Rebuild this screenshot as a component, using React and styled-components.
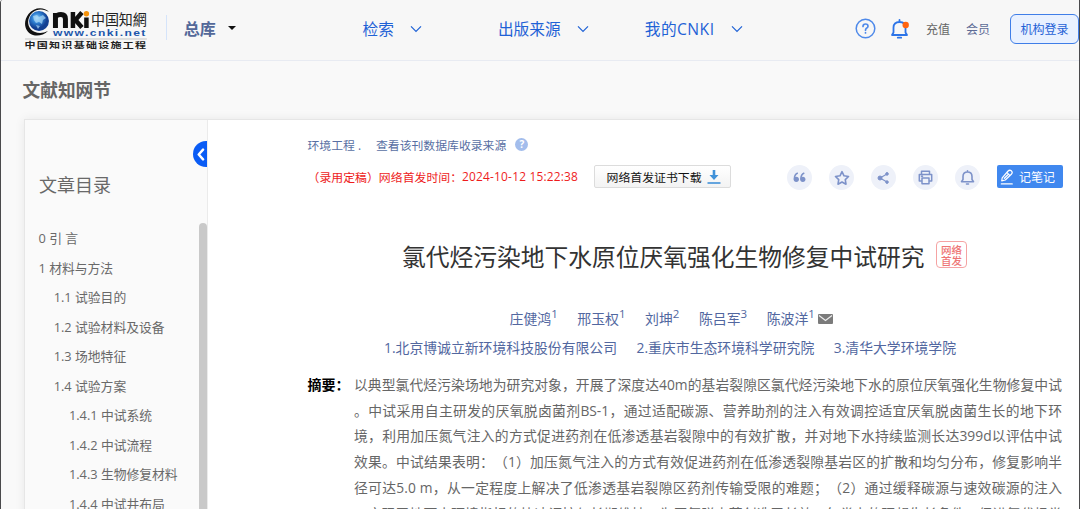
import React from 'react';
import styled, { createGlobalStyle } from 'styled-components';

const GlobalStyle = createGlobalStyle`
  * {
    box-sizing: border-box;
  }

  body {
    margin: 0;
    overflow: hidden;
    background: #f9f9f9;
    font-family: 'Open Sans', 'Noto Sans CJK SC', sans-serif;
    text-spacing-trim: space-all;
    white-space: nowrap;
  }
`;

const Page = styled.div`
  width: 1080px;
  height: 509px;
  overflow: hidden;
  border-left: 1px solid #4a4a4c;
  border-right: 1px solid #4a4a4c;
  border-top-left-radius: 3px;
`;

const Header = styled.header`
  display: flex;
  align-items: center;
  height: 61px;
  background: #f7f7f7;
  border-bottom: 1px solid #e8ebf2;
  padding: 0 0 3px 23px;
`;

const Divider = styled.div`
  width: 1px;
  height: 25px;
  margin: 0 16.5px 2px 18.5px;
  background: #d5e4fa;
`;

const Library = styled.div`
  display: flex;
  align-items: center;
  width: 179px;
  padding-bottom: 2px;
  font-size: 16px;
  font-weight: 700;
  color: #536899;

  &::after {
    content: '';
    margin: 0 0 0 12px;
    border: 4px solid transparent;
    border-top-color: #111;
    border-bottom: 0;
  }
`;

const NavItem = styled.div`
  display: flex;
  align-items: center;
  gap: 16px;
  width: ${props => props.$width}px;
  font-size: 15.7px;
  color: #1f62d6;
  letter-spacing: ${props => props.$spacing || 0}px;
`;

const HeaderTools = styled.div`
  display: flex;
  align-items: center;
  font-size: 12px;
  color: #666;

  svg {
    display: block;
    margin-right: 14px;
  }

  span {
    margin-left: 2px;
    margin-right: 14px;
  }

  span + span {
    color: #5d6b96;
    margin-right: 20px;
  }
`;

const LoginButton = styled.button`
  width: 69px;
  height: 30px;
  flex-shrink: 0;
  padding: 0;
  border: 1px solid #3f7ee8;
  border-radius: 6px;
  background: #e9f1ff;
  color: #1f62d6;
  font-family: inherit;
  font-size: 12px;
`;

const PageTitle = styled.h1`
  height: 58px;
  margin: 0;
  padding-left: 21.5px;
  font-size: 17.7px;
  line-height: 58px;
  color: #666;
`;

const Body = styled.div`
  display: flex;
  height: 400px;
  margin-left: 23px;
  border: 1px solid #e6e6e6;
  border-width: 1px 0 0 1px;
  box-shadow: 0 0 10px rgba(0, 0, 0, 0.07);
`;

const Sidebar = styled.aside`
  position: relative;
  width: 183px;
  flex-shrink: 0;
  overflow: hidden;
  background: #fafafa;
  border-right: 1px solid #ebebeb;
  color: #696969;

  h2 {
    margin: 0;
    padding: 51px 0 0 14px;
    height: 103px;
    font-size: 18px;
    font-weight: 400;
    line-height: 28px;
  }
`;

const Collapse = styled.button`
  position: absolute;
  top: 21px;
  right: -12px;
  width: 26px;
  height: 26px;
  padding: 0 0 0 3px;
  border: 0;
  border-radius: 50%;
  background: #0a5cf5;

  svg {
    display: block;
  }
`;

const TocRow = styled.div`
  display: flex;
  justify-content: space-between;
`;

const TocList = styled.div`
  padding-left: 13.5px;
`;

const TocItem = styled.div`
  height: 29.55px;
  padding-left: ${props => props.$level * 15.2}px;
  font-size: 12.8px;
  line-height: 30px;
`;

const Scrollbar = styled.div`
  width: 8px;
  height: 300px;
  border-radius: 4px;
  background: #c9c9c9;
`;

const Article = styled.main`
  flex: 1;
  padding: 15px 17px 0 99.5px;
  background: #fff;
`;

const Source = styled.div`
  display: flex;
  align-items: center;
  height: 18px;
  font-size: 11.85px;
  color: #586fa3;

  span {
    width: 68.5px;
  }

  i {
    width: 13px;
    height: 13px;
    margin-left: 9px;
    border-radius: 50%;
    background: #a3bdec;
    color: #fff;
    font-size: 10px;
    font-style: normal;
    font-weight: 700;
    line-height: 13px;
    text-align: center;
  }
`;

const Actions = styled.div`
  display: flex;
  align-items: center;
  height: 25px;
  margin-top: 12px;
`;

const Published = styled.div`
  display: flex;
  width: 286.5px;
  padding-bottom: 2px;
  font-size: 11.9px;
  color: #ee1c1c;

  time {
    letter-spacing: 0.2px;
  }
`;

const Certificate = styled.button`
  display: flex;
  align-items: center;
  gap: 5px;
  width: 137px;
  height: 23px;
  margin: -2px 56px 0 0;
  padding: 0 0 0 11.5px;
  flex-shrink: 0;
  border: 1px solid #dcdcdc;
  border-radius: 2px;
  background: linear-gradient(#fff, #f3f3f3);
  color: #111;
  font-family: inherit;
  font-size: 11.9px;
`;

const RoundButton = styled.button`
  display: flex;
  align-items: center;
  justify-content: center;
  width: 25px;
  height: 25px;
  margin-right: 17px;
  padding: 0;
  flex-shrink: 0;
  border: 0;
  border-radius: 50%;
  background: #eef1f9;
  color: #7d92c9;
`;

const NoteButton = styled.button`
  display: flex;
  align-items: center;
  gap: 5px;
  width: 66px;
  height: 23px;
  margin: -2px 0 0;
  padding: 0 0 0 3px;
  flex-shrink: 0;
  border: 0;
  border-radius: 2px;
  background: #4088ef;
  color: #fff;
  font-family: inherit;
  font-size: 12px;
`;

const TitleRow = styled.div`
  display: flex;
  align-items: center;
  height: 40px;
  margin-top: 45px;
  padding-left: 94.5px;

  h2 {
    margin: 0;
    font-size: 23.75px;
    font-weight: 400;
    color: #333;
  }
`;

const Stamp = styled.div`
  display: flex;
  flex-direction: column;
  align-items: center;
  justify-content: center;
  width: 31px;
  height: 27px;
  margin: -1px 0 0 11.5px;
  border: 1.5px solid #f5a3a3;
  border-radius: 4px;
  color: #ee7575;
  font-family: 'Noto Sans CJK SC', sans-serif;
  font-size: 10.5px;
  font-weight: 500;
  line-height: 11px;
`;

const Authors = styled.div`
  display: flex;
  align-items: center;
  height: 24px;
  margin-top: 31px;
  padding-left: 202px;
  font-size: 13.9px;
  color: #52679f;

  span {
    display: flex;
    margin-right: 19.5px;
  }

  span:last-of-type {
    margin-right: 3px;
  }

  sup {
    font-size: 11.5px;
    line-height: 12px;
  }

  svg {
    margin-top: 2px;
  }
`;

const Affiliations = styled.div`
  display: flex;
  gap: 19.5px;
  margin-top: 6px;
  padding-left: 76.5px;
  font-size: 13.85px;
  line-height: 24px;
  color: #52679f;
`;

const Abstract = styled.div`
  display: flex;
  margin-top: 12px;
  font-size: 13.8px;
  line-height: 25.7px;

  b {
    width: 46.5px;
    color: #000;
    font-size: 14px;
  }
`;

const AbstractLine = styled.div`
  width: 708px;
  color: #666;
  text-align: justify;
  text-align-last: justify;
`;

const toc = [
  { level: 0, text: '0 引 言' },
  { level: 0, text: '1 材料与方法' },
  { level: 1, text: '1.1 试验目的' },
  { level: 1, text: '1.2 试验材料及设备' },
  { level: 1, text: '1.3 场地特征' },
  { level: 1, text: '1.4 试验方案' },
  { level: 2, text: '1.4.1 中试系统' },
  { level: 2, text: '1.4.2 中试流程' },
  { level: 2, text: '1.4.3 生物修复材料' },
  { level: 2, text: '1.4.4 中试井布局' },
];

const authors = [
  ['庄健鸿', 1],
  ['邢玉权', 1],
  ['刘坤', 2],
  ['陈吕军', 3],
  ['陈波洋', 1],
];

const abstractLines = [
  '以典型氯代烃污染场地为研究对象，开展了深度达40m的基岩裂隙区氯代烃污染地下水的原位厌氧强化生物修复中试',
  '。中试采用自主研发的厌氧脱卤菌剂BS-1，通过适配碳源、营养助剂的注入有效调控适宜厌氧脱卤菌生长的地下环',
  '境，利用加压氮气注入的方式促进药剂在低渗透基岩裂隙中的有效扩散，并对地下水持续监测长达399d以评估中试',
  '效果。中试结果表明：（1）加压氮气注入的方式有效促进药剂在低渗透裂隙基岩区的扩散和均匀分布，修复影响半',
  '径可达5.0 m，从一定程度上解决了低渗透基岩裂隙区药剂传输受限的难题；（2）通过缓释碳源与速效碳源的注入',
  '，实现了地下水环境指标的快速调控与长期维持，为厌氧脱卤菌创造了长效、每类上的理想生长条件，促进氯代烃类',
];

function Logo() {
  return (
    <svg width="124" height="44" viewBox="24 7 124 44">
      <defs>
        <radialGradient id="globe" cx="0.4" cy="0.35">
          <stop offset="0" stopColor="#8fd0f8" />
          <stop offset="0.5" stopColor="#2f80d2" />
          <stop offset="1" stopColor="#123f92" />
        </radialGradient>
      </defs>
      <path
        d="M49 12C44 6.5 34 7 28.5 14C22.5 22 24.5 32 33 35C38 36.5 44 35 48 31C42 34 35 33.5 31 29.500C26.500 24.500 27.500 17 32.500 12.500C37 8.500 44 8.500 49 12Z"
        fill="#111"
      />
      <circle cx="39" cy="21" r="10" fill="url(#globe)" />
      <path
        d="M33 16L37 15L39 17L43 15L46 18L43 20L42 24L39 22L36 23L34 20ZM36 25L40 26L38 29Z"
        fill="#b9e2fb"
        opacity="0.65"
      />
      <g fill="none" stroke="#111" strokeWidth="5">
        <path d="M55.500 28V13M55.500 17Q57 14.500 61 14.500Q65.500 14.500 65.500 19V28" />
        <path d="M73 12V28M82 12.500L75.500 20L82 27.500" strokeWidth="4.500" />
        <path d="M86.500 17.500V28" strokeWidth="4.500" />
      </g>
      <circle cx="86.500" cy="13.700" r="2.700" fill="#f5920a" />
      <text
        x="91"
        y="25"
        fontSize="14.500"
        fontFamily="'Liberation Serif', 'Noto Sans CJK SC', serif"
        fill="#222"
        textLength="56"
        lengthAdjust="spacingAndGlyphs"
      >
        中国知網
      </text>
      <text
        x="53"
        y="36.500"
        fontSize="8.500"
        fontWeight="700"
        fontFamily="'Liberation Sans', sans-serif"
        fill="#1d56ab"
        letterSpacing="1"
        textLength="94"
        lengthAdjust="spacingAndGlyphs"
      >
        www.cnki.net
      </text>
      <path d="M25 39H147" stroke="#c4c4c4" />
      <text
        x="24.500"
        y="47.800"
        fontSize="8.500"
        fontWeight="700"
        fontFamily="'Noto Sans CJK SC', sans-serif"
        fill="#222"
        letterSpacing="1"
        textLength="123"
        lengthAdjust="spacingAndGlyphs"
      >
        中国知识基础设施工程
      </text>
    </svg>
  );
}

function Icon({ size, children, box = 24, stroke = 2, height }) {
  return (
    <svg
      width={size}
      height={height || size}
      viewBox={`0 0 ${box} ${box}`}
      fill="none"
      stroke="currentColor"
      strokeWidth={stroke}
      strokeLinecap="round"
      strokeLinejoin="round"
    >
      {children}
    </svg>
  );
}

function Chevron() {
  return (
    <svg width="12" height="8" viewBox="0 0 12 8" fill="none" stroke="currentColor">
      <path d="M1 1.300L6 6.300L11 1.300" strokeWidth="1.200" />
    </svg>
  );
}

function App() {
  return (
    <Page>
      <GlobalStyle />
      <Header>
        <Logo />
        <Divider />
        <Library>总库</Library>
        <NavItem $width={135.5}>
          检索
          <Chevron />
        </NavItem>
        <NavItem $width={147}>
          出版来源
          <Chevron />
        </NavItem>
        <NavItem $width={210.5} $spacing={0.45}>
          我的CNKI
          <Chevron />
        </NavItem>
        <HeaderTools>
          <Icon size={21} box={21} stroke={1.5}>
            <circle cx="10.500" cy="10.500" r="9.300" stroke="#4f8aea" />
            <path
              d="M8 8.500Q8 6 10.500 6Q13 6 13 8.200Q13 9.500 11.500 10.300Q10.500 11 10.500 12.200M10.500 14.700V14.900"
              stroke="#4f8aea"
              strokeWidth="1.700"
            />
          </Icon>
          <Icon size={20} box={20} stroke={1.8}>
            <g stroke="#2c74e8">
              <path d="M9.500 1V2.500M2 16H17L15.500 13.500V8.500Q15.500 3 9.500 3Q3.500 3 3.500 8.500V13.500Z" />
              <path d="M7.800 18.700H11.200" />
            </g>
            <circle cx="15.700" cy="6" r="3.200" fill="#ff6410" stroke="none" />
          </Icon>
          <span>充值</span>
          <span>会员</span>
        </HeaderTools>
        <LoginButton>机构登录</LoginButton>
      </Header>

      <PageTitle>文献知网节</PageTitle>

      <Body>
        <Sidebar>
          <h2>文章目录</h2>
          <Collapse>
            <Icon size={13} stroke={4.5}>
              <path d="M13 3L5 12L13 21" stroke="#fff" />
            </Icon>
          </Collapse>
          <TocRow>
            <TocList>
              {toc.map(item => (
                <TocItem key={item.text} $level={item.level}>
                  {item.text}
                </TocItem>
              ))}
            </TocList>
            <Scrollbar />
          </TocRow>
        </Sidebar>

        <Article>
          <Source>
            <span>环境工程 .</span>
            查看该刊数据库收录来源
            <i>?</i>
          </Source>

          <Actions>
            <Published>
              （录用定稿）网络首发时间：
              <time>2024-10-12 15:22:38</time>
            </Published>
            <Certificate>
              网络首发证书下载
              <svg width="14" height="15" viewBox="0 0 14 15">
                <path d="M5.700 1H8.300V6H11.500L7 11L2.500 6H5.700Z" fill="#4192d9" />
                <path d="M0.500 14H13.500" stroke="#4192d9" strokeWidth="1.600" />
              </svg>
            </Certificate>
            <RoundButton>
              <svg width="13" height="11" viewBox="0 0 13 11" fill="currentColor">
                <circle cx="3.300" cy="7.300" r="2.600" />
                <circle cx="9.800" cy="7.300" r="2.600" />
                <path
                  d="M1.400 7.300Q1.200 2.500 4.800 1M7.900 7.300Q7.700 2.500 11.300 1"
                  fill="none"
                  stroke="currentColor"
                  strokeWidth="1.500"
                />
              </svg>
            </RoundButton>
            <RoundButton>
              <Icon size={16} stroke={2.4}>
                <path d="M12 2.500L15 8.700L21.800 9.700L16.900 14.500L18 21.300L12 18L6 21.300L7.100 14.500L2.200 9.700L9 8.700Z" />
              </Icon>
            </RoundButton>
            <RoundButton>
              <svg width="13" height="14" viewBox="0 0 13 14" fill="currentColor" stroke="currentColor">
                <path d="M3 7L10 3M3 7L10 11" strokeWidth="1.200" />
                <circle cx="3" cy="7" r="2" />
                <circle cx="10" cy="2.900" r="1.300" />
                <circle cx="10" cy="11.100" r="1.300" />
              </svg>
            </RoundButton>
            <RoundButton>
              <Icon size={15} box={15} stroke={1.5}>
                <path d="M3.500 4V1.300H11.500V4M4 11H1.300V4.500H13.700V11H11M4 8H11V13.700H4ZM3.500 6.300H4.500" />
              </Icon>
            </RoundButton>
            <RoundButton>
              <Icon size={15} box={15} stroke={1.6}>
                <path d="M7.500 0.800V1.500M1.500 11.700H13.500L12 9.500V6.500Q12 2 7.500 2Q3 2 3 6.500V9.500ZM6.500 14H8.500" />
              </Icon>
            </RoundButton>
            <NoteButton>
              <Icon size={14} height={17} box={16} stroke={1.4}>
                <path d="M2.500 9.500L9 2Q11 0 13 1.500Q15 3.500 13 5.500L6 12L2 13ZM8 3.500L11.500 7M5 10L9 6M1.500 16.500H14" />
              </Icon>
              记笔记
            </NoteButton>
          </Actions>

          <TitleRow>
            <h2>氯代烃污染地下水原位厌氧强化生物修复中试研究</h2>
            <Stamp>
              <span>网络</span>
              <span>首发</span>
            </Stamp>
          </TitleRow>

          <Authors>
            {authors.map(([name, mark]) => (
              <span key={name}>
                {name}
                <sup>{mark}</sup>
              </span>
            ))}
            <svg width="15" height="10" viewBox="0 0 15 10">
              <rect width="15" height="10" rx="1" fill="#7b7b7b" />
              <path d="M1 1.500L7.500 6.500L14 1.500" fill="none" stroke="#eee" strokeWidth="1.200" />
            </svg>
          </Authors>

          <Affiliations>
            <span>1.北京博诚立新环境科技股份有限公司</span>
            <span>2.重庆市生态环境科学研究院</span>
            <span>3.清华大学环境学院</span>
          </Affiliations>

          <Abstract>
            <b>摘要：</b>
            <div>
              {abstractLines.map(line => (
                <AbstractLine key={line}>{line}</AbstractLine>
              ))}
            </div>
          </Abstract>
        </Article>
      </Body>
    </Page>
  );
}

export default App;
